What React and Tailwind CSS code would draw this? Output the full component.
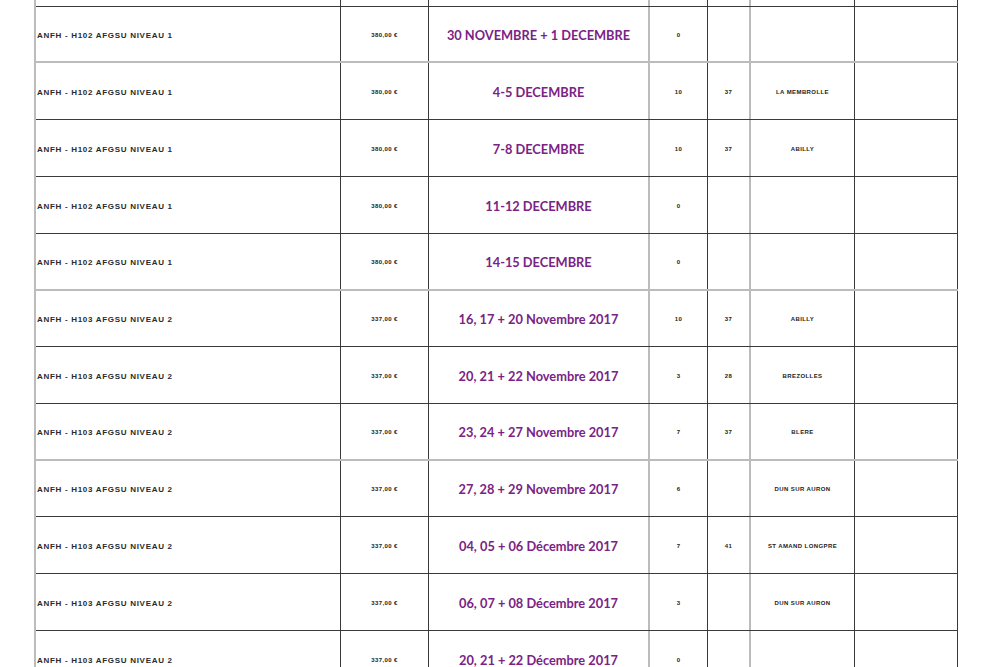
import React from 'react';

const GRAY = 'border-[#bcbcbc]';
const DARK = 'border-[#3a3a3a]';

const rows = [
  { h: 'h-[56px]', line: 'gray', course: 'ANFH - H102 AFGSU NIVEAU 1', price: '380,00 €', date: '30 NOVEMBRE + 1 DECEMBRE', n: '0', dep: '', place: '' },
  { h: 'h-[57px]', line: 'dark', course: 'ANFH - H102 AFGSU NIVEAU 1', price: '380,00 €', date: '4-5 DECEMBRE', n: '10', dep: '37', place: 'LA MEMBROLLE' },
  { h: 'h-[57px]', line: 'dark', course: 'ANFH - H102 AFGSU NIVEAU 1', price: '380,00 €', date: '7-8 DECEMBRE', n: '10', dep: '37', place: 'ABILLY' },
  { h: 'h-[57px]', line: 'dark', course: 'ANFH - H102 AFGSU NIVEAU 1', price: '380,00 €', date: '11-12 DECEMBRE', n: '0', dep: '', place: '' },
  { h: 'h-[57px]', line: 'gray', course: 'ANFH - H102 AFGSU NIVEAU 1', price: '380,00 €', date: '14-15 DECEMBRE', n: '0', dep: '', place: '' },
  { h: 'h-[56px]', line: 'dark', course: 'ANFH - H103 AFGSU NIVEAU 2', price: '337,00 €', date: '16, 17 + 20 Novembre 2017', n: '10', dep: '37', place: 'ABILLY' },
  { h: 'h-[57px]', line: 'dark', course: 'ANFH - H103 AFGSU NIVEAU 2', price: '337,00 €', date: '20, 21 + 22 Novembre 2017', n: '3', dep: '28', place: 'BREZOLLES' },
  { h: 'h-[57px]', line: 'gray', course: 'ANFH - H103 AFGSU NIVEAU 2', price: '337,00 €', date: '23, 24 + 27 Novembre 2017', n: '7', dep: '37', place: 'BLERE' },
  { h: 'h-[56px]', line: 'dark', course: 'ANFH - H103 AFGSU NIVEAU 2', price: '337,00 €', date: '27, 28 + 29 Novembre 2017', n: '6', dep: '', place: 'DUN SUR AURON' },
  { h: 'h-[57px]', line: 'dark', course: 'ANFH - H103 AFGSU NIVEAU 2', price: '337,00 €', date: '04, 05 + 06 Décembre 2017', n: '7', dep: '41', place: 'ST AMAND LONGPRE' },
  { h: 'h-[57px]', line: 'dark', course: 'ANFH - H103 AFGSU NIVEAU 2', price: '337,00 €', date: '06, 07 + 08 Décembre 2017', n: '3', dep: '', place: 'DUN SUR AURON' },
  { h: 'h-[57px]', line: 'dark', course: 'ANFH - H103 AFGSU NIVEAU 2', price: '337,00 €', date: '20, 21 + 22 Décembre 2017', n: '0', dep: '', place: '' },
];

const tiny = "pt-[2px] text-[6px] font-bold text-[#222] font-['Liberation_Sans',sans-serif] tracking-[0.4px]";

function Row({ r, top }) {
  const bottom = r.line === 'gray' ? `border-b-2 ${GRAY}` : `border-b ${DARK}`;
  return (
    <div className={`flex ${r.h} ${bottom}`}>
      <div className={`w-[305px] border-r ${DARK} flex items-center pt-[3px] pl-[1px] text-[8px] font-bold text-[#2a2a2a] font-['Liberation_Sans',sans-serif] tracking-[0.7px]`}>
        {!top && r.course}
      </div>
      <div className={`w-[88px] border-r ${DARK} flex items-center justify-center ${tiny}`}>
        {!top && r.price}
      </div>
      <div className={`w-[221px] border-r-2 ${GRAY} flex items-center justify-center pt-[3px] text-[12.8px] font-bold text-[#7a2385] font-['Lato',sans-serif]`}>
        {!top && r.date}
      </div>
      <div className={`w-[58px] border-r ${DARK} flex items-center justify-center ${tiny}`}>
        {!top && r.n}
      </div>
      <div className={`w-[43px] border-r-2 ${GRAY} flex items-center justify-center ${tiny}`}>
        {!top && r.dep}
      </div>
      <div className={`w-[104px] border-r ${DARK} flex items-center justify-center ${tiny}`}>
        {!top && r.place}
      </div>
      <div className={`w-[103px] border-r ${DARK}`}></div>
    </div>
  );
}

export default function App() {
  return (
    <div className="w-[1000px] h-[667px] overflow-hidden bg-white pl-[34px]">
      <div className={`w-[924px] border-l-2 ${GRAY}`}>
        <Row r={{ h: 'h-[7px]', line: 'dark' }} top />
        {rows.map((r, i) => (
          <Row key={i} r={r} />
        ))}
      </div>
    </div>
  );
}
